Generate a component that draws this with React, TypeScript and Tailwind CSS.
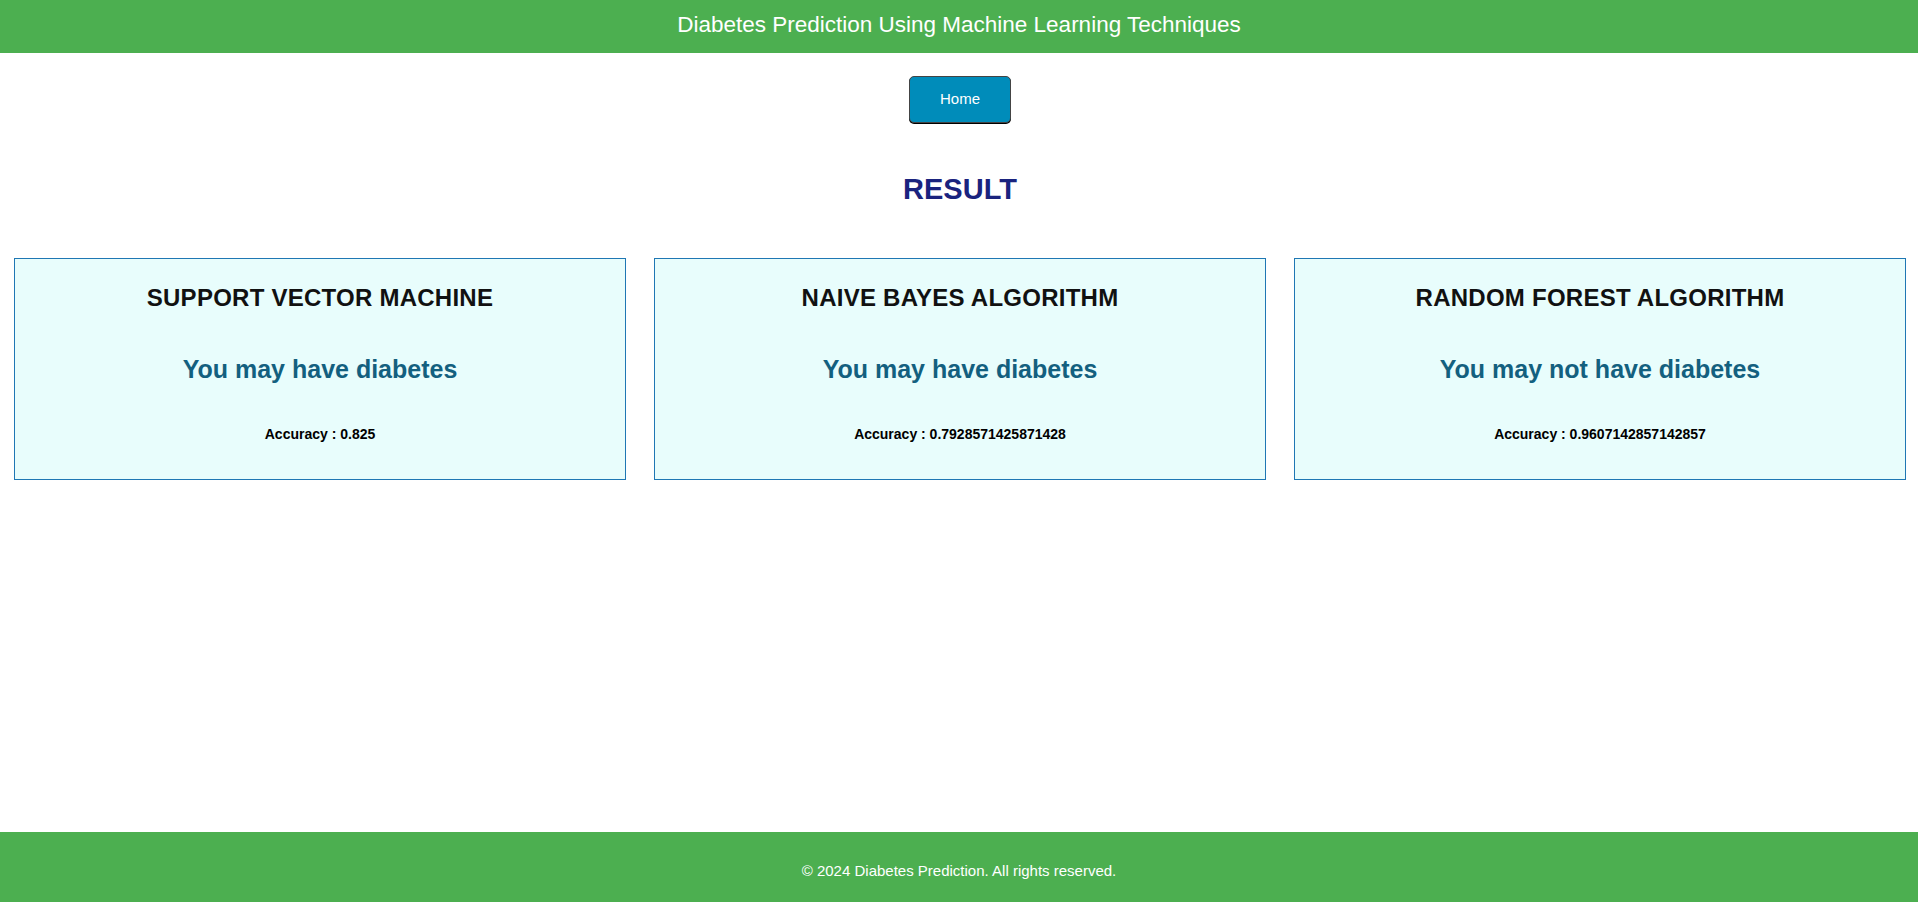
import React from "react";

const cards = [
  { title: "SUPPORT VECTOR MACHINE", result: "You may have diabetes", acc: "0.825" },
  { title: "NAIVE BAYES ALGORITHM", result: "You may have diabetes", acc: "0.7928571425871428" },
  { title: "RANDOM FOREST ALGORITHM", result: "You may not have diabetes", acc: "0.9607142857142857" },
];

export default function App() {
  return (
    <div className="min-h-[902px] flex flex-col bg-white font-['Liberation_Sans',Arial,sans-serif]">
      <header className="h-[53px] bg-[#4caf50] flex items-center justify-center pb-[4px] text-white text-[22.5px]">
        Diabetes Prediction Using Machine Learning Techniques
      </header>
      <main className="flex-1 flex flex-col">
        <div className="pt-[23px] pl-[2px] flex justify-center">
          <button className="w-[102px] h-[47px] bg-[#008cba] text-white text-[15px] rounded-[5px] border border-[#444] shadow-[0_1px_0_#000]">
            Home
          </button>
        </div>
        <h2 className="mt-[50px] pl-[2px] text-center text-[29px] leading-[33px] font-bold text-[#1a237e]">RESULT</h2>
        <div className="mt-[52px] pl-[14px] flex gap-[28px]">
          {cards.map((c) => (
            <div
              key={c.title}
              className="w-[612px] h-[222px] border border-[#1f77b4] bg-[#e8fdfc] pt-[25px] text-center"
            >
              <div className="text-[24px] leading-[28px] tracking-[0.25px] font-bold text-[#111]">{c.title}</div>
              <div className="mt-[42px] text-[25px] leading-[30px] font-bold text-[#13607f]">{c.result}</div>
              <div className="mt-[41px] text-[14px] leading-[18px] font-bold text-black">Accuracy : {c.acc}</div>
            </div>
          ))}
        </div>
      </main>
      <footer className="h-[70px] bg-[#4caf50] pt-[30px] text-center text-white text-[15px] leading-[18px]">
        © 2024 Diabetes Prediction. All rights reserved.
      </footer>
    </div>
  );
}
